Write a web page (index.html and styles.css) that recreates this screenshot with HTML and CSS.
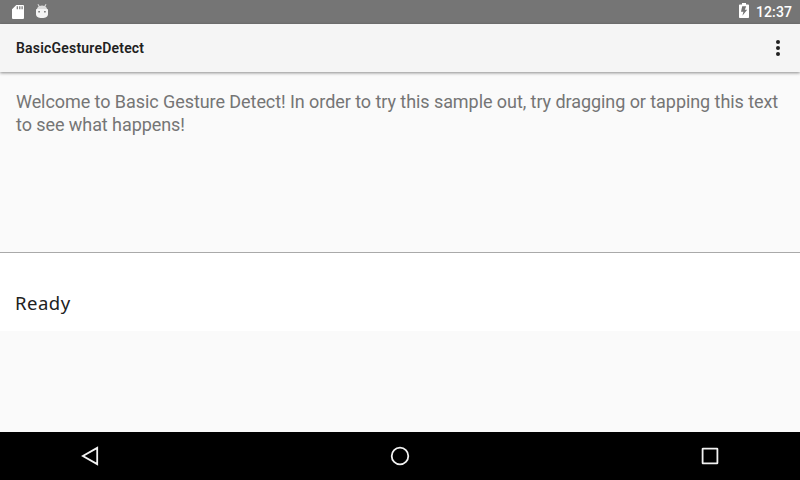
FILE: index.html
```html
<!DOCTYPE html>
<html lang="en">
<head>
<meta charset="utf-8">
<title>BasicGestureDetect</title>
<link rel="stylesheet" href="styles.css">
</head>
<body>
<div class="status-bar">
  <svg class="sd-card" width="12" height="14" viewBox="0 0 12 14"><path fill="#fff" fill-rule="evenodd" d="M4.3 0H11a1 1 0 0 1 1 1v12a1 1 0 0 1-1 1H1a1 1 0 0 1-1-1V4.3zM4.7 1.2v3h1.2v-3zM7.2 1.2v3h1.2v-3zM9.5 1.2v3h1.2v-3z"/></svg>
  <svg class="robot" width="12" height="15" viewBox="0 0 12 15"><path fill="#fff" fill-opacity=".75" d="M.6 6C.8 4.4 1.6 3.2 2.7 2.5L1.5.4 2.3 0l1.4 2a6 6 0 0 1 4.6 0L9.7 0l.8.4-1.2 2.1c1.1.7 1.9 1.9 2.1 3.5z"/><path fill="#fff" fill-opacity=".93" fill-rule="evenodd" d="M0 5.3h12V10c0 2.8-2.2 4-6 4s-6-1.2-6-4zM2.3 7v1.6h1.6V7zM8.1 7v1.6h1.6V7z"/></svg>
  <svg class="battery" width="10" height="15" viewBox="0 0 10 15"><path fill="#fff" d="M3 0h4v1.4h2.2a.8.8 0 0 1 .8.8v12a.8.8 0 0 1-.8.8H.8a.8.8 0 0 1-.8-.8v-12a.8.8 0 0 1 .8-.8H3z"/><path fill="#757575" d="M7.2 3.2H3.2L2 8.7h2.4L3.4 12.8l4.8-6H5.8z"/></svg>
  <span class="clock">12:37</span>
</div>
<header class="app-bar">
  <h1 class="title">BasicGestureDetect</h1>
  <svg width="4" height="16" viewBox="0 0 4 16" fill="#212121"><circle cx="2" cy="2" r="2"/><circle cx="2" cy="8" r="2"/><circle cx="2" cy="14" r="2"/></svg>
</header>
<main class="content">
  <p class="intro">Welcome to Basic Gesture Detect! In order to try this sample out, try dragging or tapping this text to see what happens!</p>
  <div class="log">Ready</div>
</main>
<nav class="nav-bar">
  <svg width="20" height="20" viewBox="0 0 20 20"><path d="M17.2 1.9v16.2L2.9 10z"/></svg>
  <svg width="20" height="20" viewBox="0 0 20 20"><circle cx="10" cy="10" r="8.3"/></svg>
  <svg width="20" height="20" viewBox="0 0 20 20"><rect x="2.6" y="2.6" width="14.8" height="14.8" rx=".4"/></svg>
</nav>
</body>
</html>
```
FILE: styles.css
```css
* { box-sizing: border-box; }
body {
  display: flex;
  flex-direction: column;
  height: 480px;
  margin: 0;
  overflow: hidden;
  background: #fafafa;
  font-family: Roboto, sans-serif;
}
svg { display: block; flex: none; }
.status-bar {
  display: flex;
  align-items: flex-start;
  height: 24px;
  padding: 4px 8px 0 12px;
  background: #757575;
}
.sd-card { margin-top: 1px; }
.robot { margin-left: 12px; }
.battery { margin: -1px 7px 0 auto; }
.clock {
  width: 36px;
  color: #fff;
  font-size: 14px;
  font-weight: 500;
  letter-spacing: .1px;
  line-height: 16px;
  white-space: nowrap;
}
.app-bar {
  display: flex;
  position: relative;
  align-items: center;
  justify-content: space-between;
  height: 48px;
  padding: 0 20px 0 16px;
  background: #f5f5f5;
  box-shadow: 0 1px 3px rgba(0, 0, 0, .45);
}
.title {
  margin: 0;
  color: #212121;
  font-size: 14px;
  font-weight: 600;
  letter-spacing: .2px;
  line-height: 16px;
}
.content { flex: 1; }
.intro {
  height: 180px;
  margin: 0;
  padding: 18px 16px 0;
  color: #757575;
  font-size: 18px;
  letter-spacing: -.065px;
  line-height: 23px;
}
.log {
  height: 79px;
  padding: 37px 15px 0;
  border-top: 1px solid #a9a9a9;
  background: #fff;
  color: #212121;
  font-family: "Noto Sans", sans-serif;
  font-size: 18.5px;
  letter-spacing: .5px;
  line-height: 25px;
}
.nav-bar {
  display: flex;
  align-items: center;
  justify-content: space-between;
  height: 48px;
  padding: 0 80px;
  background: #000;
}
.nav-bar svg {
  fill: none;
  stroke: #f2f2f2;
  stroke-width: 1.8;
}
```
